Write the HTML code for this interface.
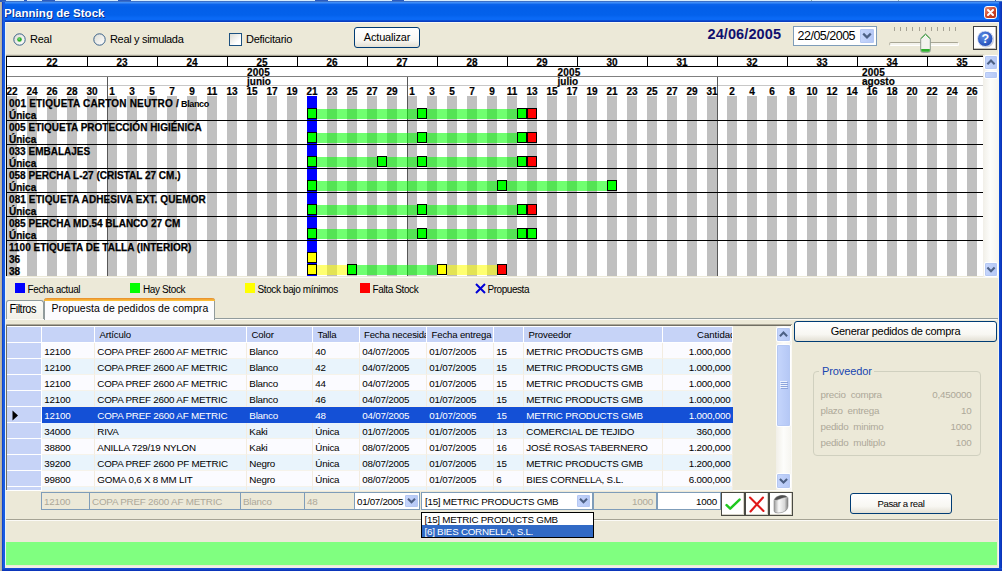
<!DOCTYPE html>
<html><head><meta charset="utf-8"><title>Planning de Stock</title>
<style>
html,body{margin:0;padding:0}
body{width:1002px;height:571px;overflow:hidden;position:relative;background:#ece9d8;font-family:"Liberation Sans",sans-serif;font-size:11px;color:#000}
div{position:absolute;box-sizing:border-box}
.t{white-space:pre}
.b{font-weight:bold;-webkit-text-stroke:0.2px #000}
svg{position:absolute;overflow:visible}
.sq{width:10px;height:11px;border:1px solid #000}
.sbb{background:linear-gradient(90deg,#c6d6fc,#b4c7f5);border:1px solid #fff;border-radius:2px;box-shadow:inset 0 0 0 1px #b5c8f3}
.btn{border:1px solid #003c74;border-radius:3px;background:linear-gradient(#ffffff,#f8f7f2 65%,#e3e0d4);text-align:center}
.hc{background:#c6d3f7;border-right:1px solid #fff;border-bottom:1px solid #fff}
.hh{border-top:1px solid #fff}
.ed{border:1px solid #7f9db9}
</style></head><body>

<div style="left:0px;top:0px;width:1002px;height:2px;background:#2a5cc0"></div>
<div style="left:6px;top:0px;width:18px;height:1px;background:#d6ecfc"></div>
<div style="left:27px;top:0px;width:15px;height:1px;background:#d6ecfc"></div>
<div style="left:55px;top:0px;width:63px;height:1px;background:#d6ecfc"></div>
<div style="left:131px;top:0px;width:184px;height:1px;background:#d6ecfc"></div>
<div style="left:328px;top:0px;width:64px;height:1px;background:#d6ecfc"></div>
<div style="left:404px;top:0px;width:591px;height:1px;background:#d6ecfc"></div>
<div style="left:996px;top:0px;width:6px;height:1px;background:#d6ecfc"></div>
<div style="left:811px;top:0px;width:1px;height:1px;background:#8aa"></div>
<div style="left:898px;top:0px;width:1px;height:1px;background:#8aa"></div>
<div style="left:2px;top:1px;width:1000px;height:21px;background:linear-gradient(#3a6fc8 0px,#3a6fc8 1px,#4a98fa 1px,#3585f4 2px,#0a64ec 3.5px,#035fe9 6px,#0361eb 14px,#0a69f5 17px,#0a69f5 19px,#0a47cc 19.6px,#0838b8 21px)"></div>
<div style="left:5px;top:22px;width:994px;height:1px;background:#f8f8f2"></div>
<div class="t" style="left:4px;top:7.57px;font-size:11.5px;line-height:1;color:#fff;font-weight:bold;text-shadow:1px 1px 0 #0a2f8f;letter-spacing:0.05px">Planning de Stock</div>
<div style="left:984px;top:6px;width:13px;height:13px;border:1px solid #fff;border-radius:3px;background:linear-gradient(135deg,#e8907a,#d0492a 50%,#b53418)"></div>
<svg style="left:984px;top:6px" width="13" height="13" viewBox="0 0 13 13"><path d="M4 4 L9 9 M9 4 L4 9" stroke="#fff" stroke-width="2.1" stroke-linecap="round"/></svg>
<div style="left:0px;top:2px;width:2px;height:569px;background:linear-gradient(90deg,#c6c0b0,#b0ab9c)"></div>
<div style="left:2px;top:2px;width:3px;height:569px;background:linear-gradient(90deg,#0b38c8,#1a63e6 60%,#1458dc)"></div>
<div style="left:5px;top:22px;width:1px;height:546px;background:#e9f3fb"></div>
<div style="left:998px;top:22px;width:1px;height:546px;background:#f6f5ee"></div>
<div style="left:999px;top:2px;width:3px;height:569px;background:linear-gradient(90deg,#0f4fd8,#0a2fb4)"></div>
<div style="left:2px;top:568px;width:1000px;height:3px;background:linear-gradient(#1454d8,#0a2fb4)"></div>
<div style="left:5px;top:566px;width:994px;height:2px;background:#f0eee2"></div>
<svg style="left:13px;top:33px" width="13" height="13" viewBox="0 0 13 13"><defs><linearGradient id="rg13" x1="0" y1="0" x2="1" y2="1"><stop offset="0" stop-color="#dcdcd4"/><stop offset="1" stop-color="#ffffff"/></linearGradient></defs><circle cx="6.5" cy="6.5" r="5.7" fill="url(#rg13)" stroke="#305a84" stroke-width="0.95"/><circle cx="6.5" cy="6.5" r="2.3" fill="#2cae2c"/><circle cx="6.1" cy="6.1" r="1" fill="#6fd86f"/></svg>
<div class="t" style="left:30px;top:34.29px;font-size:11px;line-height:1;letter-spacing:-0.25px">Real</div>
<svg style="left:93px;top:33px" width="13" height="13" viewBox="0 0 13 13"><defs><linearGradient id="rg93" x1="0" y1="0" x2="1" y2="1"><stop offset="0" stop-color="#dcdcd4"/><stop offset="1" stop-color="#ffffff"/></linearGradient></defs><circle cx="6.5" cy="6.5" r="5.7" fill="url(#rg93)" stroke="#305a84" stroke-width="0.95"/></svg>
<div class="t" style="left:110px;top:34.29px;font-size:11px;line-height:1;letter-spacing:-0.32px">Real y simulada</div>
<div style="left:229px;top:33px;width:13px;height:13px;border:1px solid #1c5180;background:linear-gradient(135deg,#dcdcd4,#fff 70%)"></div>
<div class="t" style="left:246px;top:34.29px;font-size:11px;line-height:1;letter-spacing:-0.25px">Deficitario</div>
<div class="btn" style="left:354px;top:27px;width:66px;height:21px;"></div>
<div class="t" style="left:354px;top:32.29px;font-size:11px;line-height:1;width:66px;text-align:center;letter-spacing:-0.2px">Actualizar</div>
<div class="t" style="left:707.5px;top:27.33px;font-size:14.5px;line-height:1;font-weight:bold;color:#10106e;letter-spacing:0.1px">24/06/2005</div>
<div class="ed" style="left:793px;top:26px;width:84px;height:20px;background:#fff"></div>
<div class="t" style="left:797.5px;top:30.02px;font-size:12.5px;line-height:1;letter-spacing:-0.5px">22/05/2005</div>
<div class="sbb" style="left:859px;top:28px;width:16px;height:16px;"></div>
<svg style="left:859px;top:28px" width="16" height="16" viewBox="0 0 16 16"><path d="M4.2 5.6 L8 9.4 L11.8 5.6" fill="none" stroke="#4d6185" stroke-width="2.2"/></svg>
<div style="left:894px;top:27px;width:1px;height:4px;background:#a5a294"></div>
<div style="left:900px;top:27px;width:1px;height:4px;background:#a5a294"></div>
<div style="left:906px;top:27px;width:1px;height:4px;background:#a5a294"></div>
<div style="left:912px;top:27px;width:1px;height:4px;background:#a5a294"></div>
<div style="left:919px;top:27px;width:1px;height:4px;background:#a5a294"></div>
<div style="left:925px;top:27px;width:1px;height:4px;background:#a5a294"></div>
<div style="left:931px;top:27px;width:1px;height:4px;background:#a5a294"></div>
<div style="left:937px;top:27px;width:1px;height:4px;background:#a5a294"></div>
<div style="left:943px;top:27px;width:1px;height:4px;background:#a5a294"></div>
<div style="left:949px;top:27px;width:1px;height:4px;background:#a5a294"></div>
<div style="left:955px;top:27px;width:1px;height:4px;background:#a5a294"></div>
<div style="left:889px;top:42px;width:70px;height:4px;border-radius:2px;background:#f4f3ec;border-top:1px solid #a9a796;border-left:1px solid #b9b7a8;border-bottom:1px solid #fff;border-right:1px solid #fff"></div>
<svg style="left:920px;top:33px" width="11" height="20" viewBox="0 0 11 20"><path d="M5.5 0.7 L10.3 5.4 L10.3 17.5 Q10.3 19.3 8.5 19.3 L2.5 19.3 Q0.7 19.3 0.7 17.5 L0.7 5.4 Z" fill="#f3f3ef" stroke="#8f9a8f" stroke-width="1"/><path d="M1.2 5.6 L5.5 1.4 L9.8 5.6" fill="none" stroke="#3fb53f" stroke-width="1"/><path d="M1.2 16 L9.8 16 L9.8 17.6 Q9.8 18.8 8.5 18.8 L2.5 18.8 Q1.2 18.8 1.2 17.6 Z" fill="#2fae2f"/></svg>
<div style="left:973px;top:26px;width:24px;height:24px;border:1px solid #404040;background:#fff;box-shadow:inset -1px -1px 0 #c8c5b8"></div>
<svg style="left:974px;top:27px" width="22" height="22" viewBox="0 0 22 22"><defs><radialGradient id="hg" cx="0.4" cy="0.35" r="0.7"><stop offset="0" stop-color="#5f8fe6"/><stop offset="1" stop-color="#1d48b4"/></radialGradient></defs><circle cx="12" cy="12.6" r="8" fill="#c9ccd6"/><circle cx="11.2" cy="11.8" r="7.7" fill="url(#hg)" stroke="#e8ecf8" stroke-width="0.8"/><text x="11.3" y="16.2" font-family="Liberation Sans" font-weight="bold" font-size="12.5" fill="#fff" text-anchor="middle">?</text></svg>
<div style="left:6px;top:54px;width:978px;height:1px;background:#dcd9ca"></div>
<div style="left:6px;top:55px;width:978px;height:1px;background:#a8a595"></div>
<div style="left:6px;top:56px;width:978px;height:220px;background:#000"></div>
<div style="left:7px;top:57px;width:976px;height:39px;background:#fff"></div>
<div style="left:87px;top:57px;width:1px;height:9px;background:#000"></div>
<div style="left:157px;top:57px;width:1px;height:9px;background:#000"></div>
<div style="left:227px;top:57px;width:1px;height:9px;background:#000"></div>
<div style="left:297px;top:57px;width:1px;height:9px;background:#000"></div>
<div style="left:367px;top:57px;width:1px;height:9px;background:#000"></div>
<div style="left:437px;top:57px;width:1px;height:9px;background:#000"></div>
<div style="left:507px;top:57px;width:1px;height:9px;background:#000"></div>
<div style="left:577px;top:57px;width:1px;height:9px;background:#000"></div>
<div style="left:647px;top:57px;width:1px;height:9px;background:#000"></div>
<div style="left:717px;top:57px;width:1px;height:9px;background:#000"></div>
<div style="left:787px;top:57px;width:1px;height:9px;background:#000"></div>
<div style="left:857px;top:57px;width:1px;height:9px;background:#000"></div>
<div style="left:927px;top:57px;width:1px;height:9px;background:#000"></div>
<div class="t b" style="left:32px;top:58.33px;width:40px;height:7.67px;overflow:hidden;text-align:center;font-size:10px;line-height:1">22</div>
<div class="t b" style="left:102px;top:58.33px;width:40px;height:7.67px;overflow:hidden;text-align:center;font-size:10px;line-height:1">23</div>
<div class="t b" style="left:172px;top:58.33px;width:40px;height:7.67px;overflow:hidden;text-align:center;font-size:10px;line-height:1">24</div>
<div class="t b" style="left:242px;top:58.33px;width:40px;height:7.67px;overflow:hidden;text-align:center;font-size:10px;line-height:1">25</div>
<div class="t b" style="left:312px;top:58.33px;width:40px;height:7.67px;overflow:hidden;text-align:center;font-size:10px;line-height:1">26</div>
<div class="t b" style="left:382px;top:58.33px;width:40px;height:7.67px;overflow:hidden;text-align:center;font-size:10px;line-height:1">27</div>
<div class="t b" style="left:452px;top:58.33px;width:40px;height:7.67px;overflow:hidden;text-align:center;font-size:10px;line-height:1">28</div>
<div class="t b" style="left:522px;top:58.33px;width:40px;height:7.67px;overflow:hidden;text-align:center;font-size:10px;line-height:1">29</div>
<div class="t b" style="left:592px;top:58.33px;width:40px;height:7.67px;overflow:hidden;text-align:center;font-size:10px;line-height:1">30</div>
<div class="t b" style="left:662px;top:58.33px;width:40px;height:7.67px;overflow:hidden;text-align:center;font-size:10px;line-height:1">31</div>
<div class="t b" style="left:732px;top:58.33px;width:40px;height:7.67px;overflow:hidden;text-align:center;font-size:10px;line-height:1">32</div>
<div class="t b" style="left:802px;top:58.33px;width:40px;height:7.67px;overflow:hidden;text-align:center;font-size:10px;line-height:1">33</div>
<div class="t b" style="left:872px;top:58.33px;width:40px;height:7.67px;overflow:hidden;text-align:center;font-size:10px;line-height:1">34</div>
<div class="t b" style="left:942px;top:58.33px;width:40px;height:7.67px;overflow:hidden;text-align:center;font-size:10px;line-height:1">35</div>
<div style="left:7px;top:66px;width:976px;height:1px;background:#000"></div>
<div style="left:7px;top:76px;width:976px;height:1px;background:#808080"></div>
<div class="t b" style="left:247px;top:67.53px;font-size:10px;line-height:1;letter-spacing:0.2px">2005</div>
<div class="t b" style="left:557.5px;top:67.53px;font-size:10px;line-height:1;letter-spacing:0.2px">2005</div>
<div class="t b" style="left:862px;top:67.53px;font-size:10px;line-height:1;letter-spacing:0.2px">2005</div>
<div style="left:7px;top:85px;width:976px;height:1px;background:#c8c8c8"></div>
<div class="t b" style="left:247px;top:76.83px;font-size:10px;line-height:1;">junio</div>
<div class="t b" style="left:557.5px;top:76.83px;font-size:10px;line-height:1;">julio</div>
<div class="t b" style="left:862px;top:76.83px;font-size:10px;line-height:1;">agosto</div>
<div style="left:7px;top:96px;width:976px;height:180px;background:repeating-linear-gradient(90deg,#c0c0c0 0,#c0c0c0 10px,#fff 10px,#fff 20px)"></div>
<div style="left:107px;top:77px;width:1px;height:199px;background:#585858"></div>
<div style="left:407px;top:77px;width:1px;height:199px;background:#585858"></div>
<div style="left:717px;top:77px;width:1px;height:199px;background:#585858"></div>
<div class="t b" style="left:2px;top:87.23px;font-size:10px;line-height:1;width:20px;text-align:center;">22</div>
<div class="t b" style="left:22px;top:87.23px;font-size:10px;line-height:1;width:20px;text-align:center;">24</div>
<div class="t b" style="left:42px;top:87.23px;font-size:10px;line-height:1;width:20px;text-align:center;">26</div>
<div class="t b" style="left:62px;top:87.23px;font-size:10px;line-height:1;width:20px;text-align:center;">28</div>
<div class="t b" style="left:82px;top:87.23px;font-size:10px;line-height:1;width:20px;text-align:center;">30</div>
<div class="t b" style="left:102px;top:87.23px;font-size:10px;line-height:1;width:20px;text-align:center;">1</div>
<div class="t b" style="left:122px;top:87.23px;font-size:10px;line-height:1;width:20px;text-align:center;">3</div>
<div class="t b" style="left:142px;top:87.23px;font-size:10px;line-height:1;width:20px;text-align:center;">5</div>
<div class="t b" style="left:162px;top:87.23px;font-size:10px;line-height:1;width:20px;text-align:center;">7</div>
<div class="t b" style="left:182px;top:87.23px;font-size:10px;line-height:1;width:20px;text-align:center;">9</div>
<div class="t b" style="left:202px;top:87.23px;font-size:10px;line-height:1;width:20px;text-align:center;">11</div>
<div class="t b" style="left:222px;top:87.23px;font-size:10px;line-height:1;width:20px;text-align:center;">13</div>
<div class="t b" style="left:242px;top:87.23px;font-size:10px;line-height:1;width:20px;text-align:center;">15</div>
<div class="t b" style="left:262px;top:87.23px;font-size:10px;line-height:1;width:20px;text-align:center;">17</div>
<div class="t b" style="left:282px;top:87.23px;font-size:10px;line-height:1;width:20px;text-align:center;">19</div>
<div class="t b" style="left:302px;top:87.23px;font-size:10px;line-height:1;width:20px;text-align:center;">21</div>
<div class="t b" style="left:322px;top:87.23px;font-size:10px;line-height:1;width:20px;text-align:center;">23</div>
<div class="t b" style="left:342px;top:87.23px;font-size:10px;line-height:1;width:20px;text-align:center;">25</div>
<div class="t b" style="left:362px;top:87.23px;font-size:10px;line-height:1;width:20px;text-align:center;">27</div>
<div class="t b" style="left:382px;top:87.23px;font-size:10px;line-height:1;width:20px;text-align:center;">29</div>
<div class="t b" style="left:402px;top:87.23px;font-size:10px;line-height:1;width:20px;text-align:center;">1</div>
<div class="t b" style="left:422px;top:87.23px;font-size:10px;line-height:1;width:20px;text-align:center;">3</div>
<div class="t b" style="left:442px;top:87.23px;font-size:10px;line-height:1;width:20px;text-align:center;">5</div>
<div class="t b" style="left:462px;top:87.23px;font-size:10px;line-height:1;width:20px;text-align:center;">7</div>
<div class="t b" style="left:482px;top:87.23px;font-size:10px;line-height:1;width:20px;text-align:center;">9</div>
<div class="t b" style="left:502px;top:87.23px;font-size:10px;line-height:1;width:20px;text-align:center;">11</div>
<div class="t b" style="left:522px;top:87.23px;font-size:10px;line-height:1;width:20px;text-align:center;">13</div>
<div class="t b" style="left:542px;top:87.23px;font-size:10px;line-height:1;width:20px;text-align:center;">15</div>
<div class="t b" style="left:562px;top:87.23px;font-size:10px;line-height:1;width:20px;text-align:center;">17</div>
<div class="t b" style="left:582px;top:87.23px;font-size:10px;line-height:1;width:20px;text-align:center;">19</div>
<div class="t b" style="left:602px;top:87.23px;font-size:10px;line-height:1;width:20px;text-align:center;">21</div>
<div class="t b" style="left:622px;top:87.23px;font-size:10px;line-height:1;width:20px;text-align:center;">23</div>
<div class="t b" style="left:642px;top:87.23px;font-size:10px;line-height:1;width:20px;text-align:center;">25</div>
<div class="t b" style="left:662px;top:87.23px;font-size:10px;line-height:1;width:20px;text-align:center;">27</div>
<div class="t b" style="left:682px;top:87.23px;font-size:10px;line-height:1;width:20px;text-align:center;">29</div>
<div class="t b" style="left:702px;top:87.23px;font-size:10px;line-height:1;width:20px;text-align:center;">31</div>
<div class="t b" style="left:722px;top:87.23px;font-size:10px;line-height:1;width:20px;text-align:center;">2</div>
<div class="t b" style="left:742px;top:87.23px;font-size:10px;line-height:1;width:20px;text-align:center;">4</div>
<div class="t b" style="left:762px;top:87.23px;font-size:10px;line-height:1;width:20px;text-align:center;">6</div>
<div class="t b" style="left:782px;top:87.23px;font-size:10px;line-height:1;width:20px;text-align:center;">8</div>
<div class="t b" style="left:802px;top:87.23px;font-size:10px;line-height:1;width:20px;text-align:center;">10</div>
<div class="t b" style="left:822px;top:87.23px;font-size:10px;line-height:1;width:20px;text-align:center;">12</div>
<div class="t b" style="left:842px;top:87.23px;font-size:10px;line-height:1;width:20px;text-align:center;">14</div>
<div class="t b" style="left:862px;top:87.23px;font-size:10px;line-height:1;width:20px;text-align:center;">16</div>
<div class="t b" style="left:882px;top:87.23px;font-size:10px;line-height:1;width:20px;text-align:center;">18</div>
<div class="t b" style="left:902px;top:87.23px;font-size:10px;line-height:1;width:20px;text-align:center;">20</div>
<div class="t b" style="left:922px;top:87.23px;font-size:10px;line-height:1;width:20px;text-align:center;">22</div>
<div class="t b" style="left:942px;top:87.23px;font-size:10px;line-height:1;width:20px;text-align:center;">24</div>
<div class="t b" style="left:962px;top:87.23px;font-size:10px;line-height:1;width:20px;text-align:center;">26</div>
<div style="left:307px;top:96px;width:10px;height:180px;background:#0000ff"></div>
<div style="left:7px;top:120px;width:976px;height:1px;background:#000"></div>
<div style="left:7px;top:144px;width:976px;height:1px;background:#000"></div>
<div style="left:7px;top:168px;width:976px;height:1px;background:#000"></div>
<div style="left:7px;top:192px;width:976px;height:1px;background:#000"></div>
<div style="left:7px;top:216px;width:976px;height:1px;background:#000"></div>
<div style="left:7px;top:240px;width:976px;height:1px;background:#000"></div>
<div style="left:317px;top:109px;width:200px;height:10px;background:rgba(0,255,0,0.56)"></div>
<div class="sq" style="left:307px;top:108px;background:#00ff00"></div>
<div class="sq" style="left:417px;top:108px;background:#00ff00"></div>
<div class="sq" style="left:517px;top:108px;background:#00ff00"></div>
<div class="sq" style="left:527px;top:108px;background:#ff0000"></div>
<div style="left:317px;top:133px;width:200px;height:10px;background:rgba(0,255,0,0.56)"></div>
<div class="sq" style="left:307px;top:132px;background:#00ff00"></div>
<div class="sq" style="left:417px;top:132px;background:#00ff00"></div>
<div class="sq" style="left:517px;top:132px;background:#00ff00"></div>
<div class="sq" style="left:527px;top:132px;background:#ff0000"></div>
<div style="left:317px;top:157px;width:200px;height:10px;background:rgba(0,255,0,0.56)"></div>
<div class="sq" style="left:307px;top:156px;background:#00ff00"></div>
<div class="sq" style="left:377px;top:156px;background:#00ff00"></div>
<div class="sq" style="left:417px;top:156px;background:#00ff00"></div>
<div class="sq" style="left:517px;top:156px;background:#00ff00"></div>
<div class="sq" style="left:527px;top:156px;background:#ff0000"></div>
<div style="left:317px;top:181px;width:290px;height:10px;background:rgba(0,255,0,0.56)"></div>
<div class="sq" style="left:307px;top:180px;background:#00ff00"></div>
<div class="sq" style="left:497px;top:180px;background:#00ff00"></div>
<div class="sq" style="left:607px;top:180px;background:#00ff00"></div>
<div style="left:317px;top:205px;width:200px;height:10px;background:rgba(0,255,0,0.56)"></div>
<div class="sq" style="left:307px;top:204px;background:#00ff00"></div>
<div class="sq" style="left:417px;top:204px;background:#00ff00"></div>
<div class="sq" style="left:517px;top:204px;background:#00ff00"></div>
<div class="sq" style="left:527px;top:204px;background:#ff0000"></div>
<div style="left:317px;top:229px;width:200px;height:10px;background:rgba(0,255,0,0.56)"></div>
<div class="sq" style="left:307px;top:228px;background:#00ff00"></div>
<div class="sq" style="left:417px;top:228px;background:#00ff00"></div>
<div class="sq" style="left:517px;top:228px;background:#00ff00"></div>
<div class="sq" style="left:527px;top:228px;background:#00ff00"></div>
<div class="sq" style="left:307px;top:252px;background:#ffff00"></div>
<div style="left:317px;top:265px;width:30px;height:10px;background:rgba(255,255,0,0.56)"></div>
<div style="left:357px;top:265px;width:80px;height:10px;background:rgba(0,255,0,0.56)"></div>
<div style="left:447px;top:265px;width:50px;height:10px;background:rgba(255,255,0,0.56)"></div>
<div class="sq" style="left:307px;top:264px;background:#ffff00"></div>
<div class="sq" style="left:347px;top:264px;background:#00ff00"></div>
<div class="sq" style="left:437px;top:264px;background:#ffff00"></div>
<div class="sq" style="left:497px;top:264px;background:#ff0000"></div>
<div class="t" style="left:9px;top:99.23px;font-size:10px;line-height:1;font-weight:bold;-webkit-text-stroke:0.25px #000;letter-spacing:0.18px">001 ETIQUETA CARTON NEUTRO /</div>
<div class="t" style="left:9px;top:110.73px;font-size:10px;line-height:1;font-weight:bold;-webkit-text-stroke:0.25px #000">Única</div>
<div class="t" style="left:9px;top:123.23px;font-size:10px;line-height:1;font-weight:bold;-webkit-text-stroke:0.25px #000">005 ETIQUETA PROTECCIÓN HIGIÉNICA</div>
<div class="t" style="left:9px;top:134.73px;font-size:10px;line-height:1;font-weight:bold;-webkit-text-stroke:0.25px #000">Única</div>
<div class="t" style="left:9px;top:147.23px;font-size:10px;line-height:1;font-weight:bold;-webkit-text-stroke:0.25px #000">033 EMBALAJES</div>
<div class="t" style="left:9px;top:158.73px;font-size:10px;line-height:1;font-weight:bold;-webkit-text-stroke:0.25px #000">Única</div>
<div class="t" style="left:9px;top:171.23px;font-size:10px;line-height:1;font-weight:bold;-webkit-text-stroke:0.25px #000">058 PERCHA L-27 (CRISTAL 27 CM.)</div>
<div class="t" style="left:9px;top:182.73px;font-size:10px;line-height:1;font-weight:bold;-webkit-text-stroke:0.25px #000">Única</div>
<div class="t" style="left:9px;top:195.23px;font-size:10px;line-height:1;font-weight:bold;-webkit-text-stroke:0.25px #000;letter-spacing:0.1px">081 ETIQUETA ADHESIVA EXT. QUEMOR</div>
<div class="t" style="left:9px;top:206.73px;font-size:10px;line-height:1;font-weight:bold;-webkit-text-stroke:0.25px #000">Única</div>
<div class="t" style="left:9px;top:219.23px;font-size:10px;line-height:1;font-weight:bold;-webkit-text-stroke:0.25px #000">085 PERCHA MD.54 BLANCO 27 CM</div>
<div class="t" style="left:9px;top:230.73px;font-size:10px;line-height:1;font-weight:bold;-webkit-text-stroke:0.25px #000">Única</div>
<div class="t" style="left:9px;top:243.23px;font-size:10px;line-height:1;font-weight:bold;-webkit-text-stroke:0.25px #000">1100 ETIQUETA DE TALLA (INTERIOR)</div>
<div class="t" style="left:9px;top:254.73px;font-size:10px;line-height:1;font-weight:bold;-webkit-text-stroke:0.25px #000">36</div>
<div class="t" style="left:9px;top:266.74px;font-size:10px;line-height:1;font-weight:bold;-webkit-text-stroke:0.25px #000">38</div>
<div class="t" style="left:181px;top:99.68px;font-size:9px;line-height:1;font-weight:bold;letter-spacing:-0.35px">Blanco</div>
<div style="left:983px;top:55px;width:15px;height:222px;background:linear-gradient(90deg,#f1efe8,#fdfdfb 50%,#f6f5f0)"></div>
<div class="sbb" style="left:984px;top:55px;width:14px;height:15px;"></div>
<svg style="left:984px;top:55px" width="14" height="15" viewBox="0 0 14 15"><path d="M3.4 9.2 L7 5.6 L10.6 9.2" fill="none" stroke="#4d6185" stroke-width="2.1"/></svg>
<div class="sbb" style="left:984px;top:71px;width:14px;height:8px;"></div>
<div class="sbb" style="left:984px;top:262px;width:14px;height:15px;"></div>
<svg style="left:984px;top:262px" width="14" height="15" viewBox="0 0 14 15"><path d="M3.4 5.6 L7 9.2 L10.6 5.6" fill="none" stroke="#4d6185" stroke-width="2.1"/></svg>
<div style="left:6px;top:277px;width:992px;height:1px;background:#fbfaf5"></div>
<div style="left:15px;top:283px;width:10px;height:10px;background:#0000ff"></div>
<div class="t" style="left:27.5px;top:284.64px;font-size:10px;line-height:1;letter-spacing:-0.38px">Fecha actual</div>
<div style="left:130px;top:283px;width:10px;height:10px;background:#00ff00"></div>
<div class="t" style="left:143px;top:284.64px;font-size:10px;line-height:1;letter-spacing:-0.38px">Hay Stock</div>
<div style="left:245px;top:283px;width:10px;height:10px;background:#ffff00"></div>
<div class="t" style="left:257.5px;top:284.64px;font-size:10px;line-height:1;letter-spacing:-0.38px">Stock bajo mínimos</div>
<div style="left:360px;top:283px;width:10px;height:10px;background:#ff0000"></div>
<div class="t" style="left:372.5px;top:284.64px;font-size:10px;line-height:1;letter-spacing:-0.38px">Falta Stock</div>
<svg style="left:475px;top:283px" width="11" height="11" viewBox="0 0 11 11"><path d="M1 1 L10 10 M10 1 L1 10" stroke="#0000d8" stroke-width="2"/></svg>
<div class="t" style="left:487.5px;top:284.64px;font-size:10px;line-height:1;letter-spacing:-0.45px">Propuesta</div>
<div style="left:6px;top:318px;width:992px;height:202px;border-top:1px solid #919b9c;border-bottom:1px solid #a5a394;background:#ece9d8"></div>
<div style="left:6px;top:520px;width:992px;height:1px;background:#fbfaf6"></div>
<div style="left:7px;top:319px;width:990px;height:1px;background:#fbfaf6"></div>
<div style="left:6px;top:300px;width:38px;height:19px;border:1px solid #919b9c;border-bottom:none;border-radius:3px 3px 0 0;background:linear-gradient(#fbfbf8,#f1f0e8)"></div>
<div class="t" style="left:9.5px;top:304.49px;font-size:11px;line-height:1;letter-spacing:-0.5px;transform:scaleY(1.2);transform-origin:0 84.65%">Filtros</div>
<div style="left:44px;top:298px;width:171px;height:22px;border:1px solid #919b9c;border-bottom:none;border-top:none;border-radius:3px 3px 0 0;background:#fcfcfe"></div>
<div style="left:44px;top:298px;width:171px;height:3px;border-radius:3px 3px 0 0;background:linear-gradient(#e68b2c,#ffc73c)"></div>
<div class="t" style="left:51.5px;top:303.11px;font-size:10.5px;line-height:1;letter-spacing:0.07px;transform:scaleY(1.12);transform-origin:0 84.65%">Propuesta de pedidos de compra</div>
<div style="left:6px;top:324px;width:786px;height:1px;background:#aca899"></div>
<div style="left:6px;top:325px;width:785px;height:1px;background:#716f64"></div>
<div style="left:6px;top:325px;width:1px;height:165px;background:#716f64"></div>
<div style="left:7px;top:326px;width:784px;height:164px;background:#ece9d8"></div>
<div style="left:6px;top:490px;width:786px;height:1px;background:#fbfaf6"></div>
<div style="left:791px;top:325px;width:1px;height:166px;background:#fbfaf6"></div>
<div class="hc hh" style="left:7px;top:326px;width:35px;height:17px;overflow:hidden"></div>
<div class="hc hh" style="left:42px;top:326px;width:53px;height:17px;overflow:hidden"></div>
<div class="hc hh" style="left:95px;top:326px;width:152px;height:17px;overflow:hidden"></div>
<div class="t" style="left:99.5px;top:330.17px;font-size:9.6px;line-height:1;letter-spacing:-0.15px">Artículo</div>
<div class="hc hh" style="left:247px;top:326px;width:66px;height:17px;overflow:hidden"></div>
<div class="t" style="left:251.5px;top:330.17px;font-size:9.6px;line-height:1;letter-spacing:-0.15px">Color</div>
<div class="hc hh" style="left:313px;top:326px;width:47px;height:17px;overflow:hidden"></div>
<div class="t" style="left:317.5px;top:330.17px;font-size:9.6px;line-height:1;letter-spacing:-0.15px">Talla</div>
<div class="hc hh" style="left:360px;top:326px;width:67px;height:17px;overflow:hidden"></div>
<div class="t" style="left:360px;top:330.17px;width:66px;height:12px;overflow:hidden;font-size:9.6px;line-height:1"><span style="position:absolute;left:4px;letter-spacing:-0.2px">Fecha necesidad</span></div>
<div class="hc hh" style="left:427px;top:326px;width:67px;height:17px;overflow:hidden"></div>
<div class="t" style="left:431.5px;top:330.17px;font-size:9.6px;line-height:1;letter-spacing:-0.15px">Fecha entrega</div>
<div class="hc hh" style="left:494px;top:326px;width:30px;height:17px;overflow:hidden"></div>
<div class="hc hh" style="left:524px;top:326px;width:139px;height:17px;overflow:hidden"></div>
<div class="t" style="left:528.5px;top:330.17px;font-size:9.6px;line-height:1;letter-spacing:-0.15px">Proveedor</div>
<div class="hc hh" style="left:663px;top:326px;width:70px;height:17px;overflow:hidden"></div>
<div class="t" style="left:663px;top:330.17px;width:69px;height:12px;overflow:hidden;font-size:9.6px;line-height:1"><span style="position:absolute;left:34px">Cantidad</span></div>
<div class="hc" style="left:7px;top:343px;width:35px;height:16px;"></div>
<div style="left:42px;top:343px;width:53px;height:16px;background:#fbfbff;border-right:1px solid #f3ece0;border-bottom:1px solid #f6f3ea"></div>
<div style="left:95px;top:343px;width:152px;height:16px;background:#fbfbff;border-right:1px solid #f3ece0;border-bottom:1px solid #f6f3ea"></div>
<div style="left:247px;top:343px;width:66px;height:16px;background:#fbfbff;border-right:1px solid #f3ece0;border-bottom:1px solid #f6f3ea"></div>
<div style="left:313px;top:343px;width:47px;height:16px;background:#fbfbff;border-right:1px solid #f3ece0;border-bottom:1px solid #f6f3ea"></div>
<div style="left:360px;top:343px;width:67px;height:16px;background:#fbfbff;border-right:1px solid #f3ece0;border-bottom:1px solid #f6f3ea"></div>
<div style="left:427px;top:343px;width:67px;height:16px;background:#fbfbff;border-right:1px solid #f3ece0;border-bottom:1px solid #f6f3ea"></div>
<div style="left:494px;top:343px;width:30px;height:16px;background:#fbfbff;border-right:1px solid #f3ece0;border-bottom:1px solid #f6f3ea"></div>
<div style="left:524px;top:343px;width:139px;height:16px;background:#fbfbff;border-right:1px solid #f3ece0;border-bottom:1px solid #f6f3ea"></div>
<div style="left:663px;top:343px;width:70px;height:16px;background:#fbfbff;border-right:1px solid #f3ece0;border-bottom:1px solid #f6f3ea"></div>
<div class="t" style="left:44.3px;top:346.6px;font-size:9.8px;line-height:1;color:#000;letter-spacing:-0.2px">12100</div>
<div class="t" style="left:97.3px;top:346.6px;font-size:9.8px;line-height:1;color:#000;letter-spacing:-0.2px">COPA PREF 2600 AF METRIC</div>
<div class="t" style="left:249.3px;top:346.6px;font-size:9.8px;line-height:1;color:#000;letter-spacing:-0.2px">Blanco</div>
<div class="t" style="left:315.3px;top:346.6px;font-size:9.8px;line-height:1;color:#000;letter-spacing:-0.2px">40</div>
<div class="t" style="left:362.3px;top:346.6px;font-size:9.8px;line-height:1;color:#000;letter-spacing:-0.2px">04/07/2005</div>
<div class="t" style="left:429.3px;top:346.6px;font-size:9.8px;line-height:1;color:#000;letter-spacing:-0.2px">01/07/2005</div>
<div class="t" style="left:496.3px;top:346.6px;font-size:9.8px;line-height:1;color:#000;letter-spacing:-0.2px">15</div>
<div class="t" style="left:526.3px;top:346.6px;font-size:9.8px;line-height:1;color:#000;letter-spacing:-0.2px">METRIC PRODUCTS GMB</div>
<div class="t" style="left:663px;top:346.6px;font-size:9.8px;line-height:1;width:67.5px;text-align:right;color:#000;letter-spacing:-0.2px">1.000,000</div>
<div class="hc" style="left:7px;top:359px;width:35px;height:16px;"></div>
<div style="left:42px;top:359px;width:53px;height:16px;background:#e9f4fc;border-right:1px solid #f3ece0;border-bottom:1px solid #f6f3ea"></div>
<div style="left:95px;top:359px;width:152px;height:16px;background:#e9f4fc;border-right:1px solid #f3ece0;border-bottom:1px solid #f6f3ea"></div>
<div style="left:247px;top:359px;width:66px;height:16px;background:#e9f4fc;border-right:1px solid #f3ece0;border-bottom:1px solid #f6f3ea"></div>
<div style="left:313px;top:359px;width:47px;height:16px;background:#e9f4fc;border-right:1px solid #f3ece0;border-bottom:1px solid #f6f3ea"></div>
<div style="left:360px;top:359px;width:67px;height:16px;background:#e9f4fc;border-right:1px solid #f3ece0;border-bottom:1px solid #f6f3ea"></div>
<div style="left:427px;top:359px;width:67px;height:16px;background:#e9f4fc;border-right:1px solid #f3ece0;border-bottom:1px solid #f6f3ea"></div>
<div style="left:494px;top:359px;width:30px;height:16px;background:#e9f4fc;border-right:1px solid #f3ece0;border-bottom:1px solid #f6f3ea"></div>
<div style="left:524px;top:359px;width:139px;height:16px;background:#e9f4fc;border-right:1px solid #f3ece0;border-bottom:1px solid #f6f3ea"></div>
<div style="left:663px;top:359px;width:70px;height:16px;background:#e9f4fc;border-right:1px solid #f3ece0;border-bottom:1px solid #f6f3ea"></div>
<div class="t" style="left:44.3px;top:362.6px;font-size:9.8px;line-height:1;color:#000;letter-spacing:-0.2px">12100</div>
<div class="t" style="left:97.3px;top:362.6px;font-size:9.8px;line-height:1;color:#000;letter-spacing:-0.2px">COPA PREF 2600 AF METRIC</div>
<div class="t" style="left:249.3px;top:362.6px;font-size:9.8px;line-height:1;color:#000;letter-spacing:-0.2px">Blanco</div>
<div class="t" style="left:315.3px;top:362.6px;font-size:9.8px;line-height:1;color:#000;letter-spacing:-0.2px">42</div>
<div class="t" style="left:362.3px;top:362.6px;font-size:9.8px;line-height:1;color:#000;letter-spacing:-0.2px">04/07/2005</div>
<div class="t" style="left:429.3px;top:362.6px;font-size:9.8px;line-height:1;color:#000;letter-spacing:-0.2px">01/07/2005</div>
<div class="t" style="left:496.3px;top:362.6px;font-size:9.8px;line-height:1;color:#000;letter-spacing:-0.2px">15</div>
<div class="t" style="left:526.3px;top:362.6px;font-size:9.8px;line-height:1;color:#000;letter-spacing:-0.2px">METRIC PRODUCTS GMB</div>
<div class="t" style="left:663px;top:362.6px;font-size:9.8px;line-height:1;width:67.5px;text-align:right;color:#000;letter-spacing:-0.2px">1.000,000</div>
<div class="hc" style="left:7px;top:375px;width:35px;height:16px;"></div>
<div style="left:42px;top:375px;width:53px;height:16px;background:#fbfbff;border-right:1px solid #f3ece0;border-bottom:1px solid #f6f3ea"></div>
<div style="left:95px;top:375px;width:152px;height:16px;background:#fbfbff;border-right:1px solid #f3ece0;border-bottom:1px solid #f6f3ea"></div>
<div style="left:247px;top:375px;width:66px;height:16px;background:#fbfbff;border-right:1px solid #f3ece0;border-bottom:1px solid #f6f3ea"></div>
<div style="left:313px;top:375px;width:47px;height:16px;background:#fbfbff;border-right:1px solid #f3ece0;border-bottom:1px solid #f6f3ea"></div>
<div style="left:360px;top:375px;width:67px;height:16px;background:#fbfbff;border-right:1px solid #f3ece0;border-bottom:1px solid #f6f3ea"></div>
<div style="left:427px;top:375px;width:67px;height:16px;background:#fbfbff;border-right:1px solid #f3ece0;border-bottom:1px solid #f6f3ea"></div>
<div style="left:494px;top:375px;width:30px;height:16px;background:#fbfbff;border-right:1px solid #f3ece0;border-bottom:1px solid #f6f3ea"></div>
<div style="left:524px;top:375px;width:139px;height:16px;background:#fbfbff;border-right:1px solid #f3ece0;border-bottom:1px solid #f6f3ea"></div>
<div style="left:663px;top:375px;width:70px;height:16px;background:#fbfbff;border-right:1px solid #f3ece0;border-bottom:1px solid #f6f3ea"></div>
<div class="t" style="left:44.3px;top:378.6px;font-size:9.8px;line-height:1;color:#000;letter-spacing:-0.2px">12100</div>
<div class="t" style="left:97.3px;top:378.6px;font-size:9.8px;line-height:1;color:#000;letter-spacing:-0.2px">COPA PREF 2600 AF METRIC</div>
<div class="t" style="left:249.3px;top:378.6px;font-size:9.8px;line-height:1;color:#000;letter-spacing:-0.2px">Blanco</div>
<div class="t" style="left:315.3px;top:378.6px;font-size:9.8px;line-height:1;color:#000;letter-spacing:-0.2px">44</div>
<div class="t" style="left:362.3px;top:378.6px;font-size:9.8px;line-height:1;color:#000;letter-spacing:-0.2px">04/07/2005</div>
<div class="t" style="left:429.3px;top:378.6px;font-size:9.8px;line-height:1;color:#000;letter-spacing:-0.2px">01/07/2005</div>
<div class="t" style="left:496.3px;top:378.6px;font-size:9.8px;line-height:1;color:#000;letter-spacing:-0.2px">15</div>
<div class="t" style="left:526.3px;top:378.6px;font-size:9.8px;line-height:1;color:#000;letter-spacing:-0.2px">METRIC PRODUCTS GMB</div>
<div class="t" style="left:663px;top:378.6px;font-size:9.8px;line-height:1;width:67.5px;text-align:right;color:#000;letter-spacing:-0.2px">1.000,000</div>
<div class="hc" style="left:7px;top:391px;width:35px;height:16px;"></div>
<div style="left:42px;top:391px;width:53px;height:16px;background:#e9f4fc;border-right:1px solid #f3ece0;border-bottom:1px solid #f6f3ea"></div>
<div style="left:95px;top:391px;width:152px;height:16px;background:#e9f4fc;border-right:1px solid #f3ece0;border-bottom:1px solid #f6f3ea"></div>
<div style="left:247px;top:391px;width:66px;height:16px;background:#e9f4fc;border-right:1px solid #f3ece0;border-bottom:1px solid #f6f3ea"></div>
<div style="left:313px;top:391px;width:47px;height:16px;background:#e9f4fc;border-right:1px solid #f3ece0;border-bottom:1px solid #f6f3ea"></div>
<div style="left:360px;top:391px;width:67px;height:16px;background:#e9f4fc;border-right:1px solid #f3ece0;border-bottom:1px solid #f6f3ea"></div>
<div style="left:427px;top:391px;width:67px;height:16px;background:#e9f4fc;border-right:1px solid #f3ece0;border-bottom:1px solid #f6f3ea"></div>
<div style="left:494px;top:391px;width:30px;height:16px;background:#e9f4fc;border-right:1px solid #f3ece0;border-bottom:1px solid #f6f3ea"></div>
<div style="left:524px;top:391px;width:139px;height:16px;background:#e9f4fc;border-right:1px solid #f3ece0;border-bottom:1px solid #f6f3ea"></div>
<div style="left:663px;top:391px;width:70px;height:16px;background:#e9f4fc;border-right:1px solid #f3ece0;border-bottom:1px solid #f6f3ea"></div>
<div class="t" style="left:44.3px;top:394.6px;font-size:9.8px;line-height:1;color:#000;letter-spacing:-0.2px">12100</div>
<div class="t" style="left:97.3px;top:394.6px;font-size:9.8px;line-height:1;color:#000;letter-spacing:-0.2px">COPA PREF 2600 AF METRIC</div>
<div class="t" style="left:249.3px;top:394.6px;font-size:9.8px;line-height:1;color:#000;letter-spacing:-0.2px">Blanco</div>
<div class="t" style="left:315.3px;top:394.6px;font-size:9.8px;line-height:1;color:#000;letter-spacing:-0.2px">46</div>
<div class="t" style="left:362.3px;top:394.6px;font-size:9.8px;line-height:1;color:#000;letter-spacing:-0.2px">04/07/2005</div>
<div class="t" style="left:429.3px;top:394.6px;font-size:9.8px;line-height:1;color:#000;letter-spacing:-0.2px">01/07/2005</div>
<div class="t" style="left:496.3px;top:394.6px;font-size:9.8px;line-height:1;color:#000;letter-spacing:-0.2px">15</div>
<div class="t" style="left:526.3px;top:394.6px;font-size:9.8px;line-height:1;color:#000;letter-spacing:-0.2px">METRIC PRODUCTS GMB</div>
<div class="t" style="left:663px;top:394.6px;font-size:9.8px;line-height:1;width:67.5px;text-align:right;color:#000;letter-spacing:-0.2px">1.000,000</div>
<div class="hc" style="left:7px;top:407px;width:35px;height:16px;"></div>
<div style="left:42px;top:407px;width:53px;height:16px;background:#1450d6;border-right:1px solid #1450d6;border-bottom:1px solid #1450d6"></div>
<div style="left:95px;top:407px;width:152px;height:16px;background:#1450d6;border-right:1px solid #1450d6;border-bottom:1px solid #1450d6"></div>
<div style="left:247px;top:407px;width:66px;height:16px;background:#1450d6;border-right:1px solid #1450d6;border-bottom:1px solid #1450d6"></div>
<div style="left:313px;top:407px;width:47px;height:16px;background:#1450d6;border-right:1px solid #1450d6;border-bottom:1px solid #1450d6"></div>
<div style="left:360px;top:407px;width:67px;height:16px;background:#1450d6;border-right:1px solid #1450d6;border-bottom:1px solid #1450d6"></div>
<div style="left:427px;top:407px;width:67px;height:16px;background:#1450d6;border-right:1px solid #1450d6;border-bottom:1px solid #1450d6"></div>
<div style="left:494px;top:407px;width:30px;height:16px;background:#1450d6;border-right:1px solid #1450d6;border-bottom:1px solid #1450d6"></div>
<div style="left:524px;top:407px;width:139px;height:16px;background:#1450d6;border-right:1px solid #1450d6;border-bottom:1px solid #1450d6"></div>
<div style="left:663px;top:407px;width:70px;height:16px;background:#1450d6;border-right:1px solid #1450d6;border-bottom:1px solid #1450d6"></div>
<div class="t" style="left:44.3px;top:410.6px;font-size:9.8px;line-height:1;color:#fff;letter-spacing:-0.2px">12100</div>
<div class="t" style="left:97.3px;top:410.6px;font-size:9.8px;line-height:1;color:#fff;letter-spacing:-0.2px">COPA PREF 2600 AF METRIC</div>
<div class="t" style="left:249.3px;top:410.6px;font-size:9.8px;line-height:1;color:#fff;letter-spacing:-0.2px">Blanco</div>
<div class="t" style="left:315.3px;top:410.6px;font-size:9.8px;line-height:1;color:#fff;letter-spacing:-0.2px">48</div>
<div class="t" style="left:362.3px;top:410.6px;font-size:9.8px;line-height:1;color:#fff;letter-spacing:-0.2px">04/07/2005</div>
<div class="t" style="left:429.3px;top:410.6px;font-size:9.8px;line-height:1;color:#fff;letter-spacing:-0.2px">01/07/2005</div>
<div class="t" style="left:496.3px;top:410.6px;font-size:9.8px;line-height:1;color:#fff;letter-spacing:-0.2px">15</div>
<div class="t" style="left:526.3px;top:410.6px;font-size:9.8px;line-height:1;color:#fff;letter-spacing:-0.2px">METRIC PRODUCTS GMB</div>
<div class="t" style="left:663px;top:410.6px;font-size:9.8px;line-height:1;width:67.5px;text-align:right;color:#fff;letter-spacing:-0.2px">1.000,000</div>
<div class="hc" style="left:7px;top:423px;width:35px;height:16px;"></div>
<div style="left:42px;top:423px;width:53px;height:16px;background:#e9f4fc;border-right:1px solid #f3ece0;border-bottom:1px solid #f6f3ea"></div>
<div style="left:95px;top:423px;width:152px;height:16px;background:#e9f4fc;border-right:1px solid #f3ece0;border-bottom:1px solid #f6f3ea"></div>
<div style="left:247px;top:423px;width:66px;height:16px;background:#e9f4fc;border-right:1px solid #f3ece0;border-bottom:1px solid #f6f3ea"></div>
<div style="left:313px;top:423px;width:47px;height:16px;background:#e9f4fc;border-right:1px solid #f3ece0;border-bottom:1px solid #f6f3ea"></div>
<div style="left:360px;top:423px;width:67px;height:16px;background:#e9f4fc;border-right:1px solid #f3ece0;border-bottom:1px solid #f6f3ea"></div>
<div style="left:427px;top:423px;width:67px;height:16px;background:#e9f4fc;border-right:1px solid #f3ece0;border-bottom:1px solid #f6f3ea"></div>
<div style="left:494px;top:423px;width:30px;height:16px;background:#e9f4fc;border-right:1px solid #f3ece0;border-bottom:1px solid #f6f3ea"></div>
<div style="left:524px;top:423px;width:139px;height:16px;background:#e9f4fc;border-right:1px solid #f3ece0;border-bottom:1px solid #f6f3ea"></div>
<div style="left:663px;top:423px;width:70px;height:16px;background:#e9f4fc;border-right:1px solid #f3ece0;border-bottom:1px solid #f6f3ea"></div>
<div class="t" style="left:44.3px;top:426.6px;font-size:9.8px;line-height:1;color:#000;letter-spacing:-0.2px">34000</div>
<div class="t" style="left:97.3px;top:426.6px;font-size:9.8px;line-height:1;color:#000;letter-spacing:-0.2px">RIVA</div>
<div class="t" style="left:249.3px;top:426.6px;font-size:9.8px;line-height:1;color:#000;letter-spacing:-0.2px">Kaki</div>
<div class="t" style="left:315.3px;top:426.6px;font-size:9.8px;line-height:1;color:#000;letter-spacing:-0.2px">Única</div>
<div class="t" style="left:362.3px;top:426.6px;font-size:9.8px;line-height:1;color:#000;letter-spacing:-0.2px">01/07/2005</div>
<div class="t" style="left:429.3px;top:426.6px;font-size:9.8px;line-height:1;color:#000;letter-spacing:-0.2px">01/07/2005</div>
<div class="t" style="left:496.3px;top:426.6px;font-size:9.8px;line-height:1;color:#000;letter-spacing:-0.2px">13</div>
<div class="t" style="left:526.3px;top:426.6px;font-size:9.8px;line-height:1;color:#000;letter-spacing:-0.2px">COMERCIAL DE TEJIDO</div>
<div class="t" style="left:663px;top:426.6px;font-size:9.8px;line-height:1;width:67.5px;text-align:right;color:#000;letter-spacing:-0.2px">360,000</div>
<div class="hc" style="left:7px;top:439px;width:35px;height:16px;"></div>
<div style="left:42px;top:439px;width:53px;height:16px;background:#fbfbff;border-right:1px solid #f3ece0;border-bottom:1px solid #f6f3ea"></div>
<div style="left:95px;top:439px;width:152px;height:16px;background:#fbfbff;border-right:1px solid #f3ece0;border-bottom:1px solid #f6f3ea"></div>
<div style="left:247px;top:439px;width:66px;height:16px;background:#fbfbff;border-right:1px solid #f3ece0;border-bottom:1px solid #f6f3ea"></div>
<div style="left:313px;top:439px;width:47px;height:16px;background:#fbfbff;border-right:1px solid #f3ece0;border-bottom:1px solid #f6f3ea"></div>
<div style="left:360px;top:439px;width:67px;height:16px;background:#fbfbff;border-right:1px solid #f3ece0;border-bottom:1px solid #f6f3ea"></div>
<div style="left:427px;top:439px;width:67px;height:16px;background:#fbfbff;border-right:1px solid #f3ece0;border-bottom:1px solid #f6f3ea"></div>
<div style="left:494px;top:439px;width:30px;height:16px;background:#fbfbff;border-right:1px solid #f3ece0;border-bottom:1px solid #f6f3ea"></div>
<div style="left:524px;top:439px;width:139px;height:16px;background:#fbfbff;border-right:1px solid #f3ece0;border-bottom:1px solid #f6f3ea"></div>
<div style="left:663px;top:439px;width:70px;height:16px;background:#fbfbff;border-right:1px solid #f3ece0;border-bottom:1px solid #f6f3ea"></div>
<div class="t" style="left:44.3px;top:442.6px;font-size:9.8px;line-height:1;color:#000;letter-spacing:-0.2px">38800</div>
<div class="t" style="left:97.3px;top:442.6px;font-size:9.8px;line-height:1;color:#000;letter-spacing:-0.2px">ANILLA 729/19 NYLON</div>
<div class="t" style="left:249.3px;top:442.6px;font-size:9.8px;line-height:1;color:#000;letter-spacing:-0.2px">Kaki</div>
<div class="t" style="left:315.3px;top:442.6px;font-size:9.8px;line-height:1;color:#000;letter-spacing:-0.2px">Única</div>
<div class="t" style="left:362.3px;top:442.6px;font-size:9.8px;line-height:1;color:#000;letter-spacing:-0.2px">08/07/2005</div>
<div class="t" style="left:429.3px;top:442.6px;font-size:9.8px;line-height:1;color:#000;letter-spacing:-0.2px">01/07/2005</div>
<div class="t" style="left:496.3px;top:442.6px;font-size:9.8px;line-height:1;color:#000;letter-spacing:-0.2px">16</div>
<div class="t" style="left:526.3px;top:442.6px;font-size:9.8px;line-height:1;color:#000;letter-spacing:-0.2px">JOSÉ ROSAS TABERNERO</div>
<div class="t" style="left:663px;top:442.6px;font-size:9.8px;line-height:1;width:67.5px;text-align:right;color:#000;letter-spacing:-0.2px">1.200,000</div>
<div class="hc" style="left:7px;top:455px;width:35px;height:16px;"></div>
<div style="left:42px;top:455px;width:53px;height:16px;background:#e9f4fc;border-right:1px solid #f3ece0;border-bottom:1px solid #f6f3ea"></div>
<div style="left:95px;top:455px;width:152px;height:16px;background:#e9f4fc;border-right:1px solid #f3ece0;border-bottom:1px solid #f6f3ea"></div>
<div style="left:247px;top:455px;width:66px;height:16px;background:#e9f4fc;border-right:1px solid #f3ece0;border-bottom:1px solid #f6f3ea"></div>
<div style="left:313px;top:455px;width:47px;height:16px;background:#e9f4fc;border-right:1px solid #f3ece0;border-bottom:1px solid #f6f3ea"></div>
<div style="left:360px;top:455px;width:67px;height:16px;background:#e9f4fc;border-right:1px solid #f3ece0;border-bottom:1px solid #f6f3ea"></div>
<div style="left:427px;top:455px;width:67px;height:16px;background:#e9f4fc;border-right:1px solid #f3ece0;border-bottom:1px solid #f6f3ea"></div>
<div style="left:494px;top:455px;width:30px;height:16px;background:#e9f4fc;border-right:1px solid #f3ece0;border-bottom:1px solid #f6f3ea"></div>
<div style="left:524px;top:455px;width:139px;height:16px;background:#e9f4fc;border-right:1px solid #f3ece0;border-bottom:1px solid #f6f3ea"></div>
<div style="left:663px;top:455px;width:70px;height:16px;background:#e9f4fc;border-right:1px solid #f3ece0;border-bottom:1px solid #f6f3ea"></div>
<div class="t" style="left:44.3px;top:458.6px;font-size:9.8px;line-height:1;color:#000;letter-spacing:-0.2px">39200</div>
<div class="t" style="left:97.3px;top:458.6px;font-size:9.8px;line-height:1;color:#000;letter-spacing:-0.2px">COPA PREF 2600 PF METRIC</div>
<div class="t" style="left:249.3px;top:458.6px;font-size:9.8px;line-height:1;color:#000;letter-spacing:-0.2px">Negro</div>
<div class="t" style="left:315.3px;top:458.6px;font-size:9.8px;line-height:1;color:#000;letter-spacing:-0.2px">Única</div>
<div class="t" style="left:362.3px;top:458.6px;font-size:9.8px;line-height:1;color:#000;letter-spacing:-0.2px">08/07/2005</div>
<div class="t" style="left:429.3px;top:458.6px;font-size:9.8px;line-height:1;color:#000;letter-spacing:-0.2px">01/07/2005</div>
<div class="t" style="left:496.3px;top:458.6px;font-size:9.8px;line-height:1;color:#000;letter-spacing:-0.2px">15</div>
<div class="t" style="left:526.3px;top:458.6px;font-size:9.8px;line-height:1;color:#000;letter-spacing:-0.2px">METRIC PRODUCTS GMB</div>
<div class="t" style="left:663px;top:458.6px;font-size:9.8px;line-height:1;width:67.5px;text-align:right;color:#000;letter-spacing:-0.2px">1.200,000</div>
<div class="hc" style="left:7px;top:471px;width:35px;height:16px;"></div>
<div style="left:42px;top:471px;width:53px;height:16px;background:#fbfbff;border-right:1px solid #f3ece0;border-bottom:1px solid #f6f3ea"></div>
<div style="left:95px;top:471px;width:152px;height:16px;background:#fbfbff;border-right:1px solid #f3ece0;border-bottom:1px solid #f6f3ea"></div>
<div style="left:247px;top:471px;width:66px;height:16px;background:#fbfbff;border-right:1px solid #f3ece0;border-bottom:1px solid #f6f3ea"></div>
<div style="left:313px;top:471px;width:47px;height:16px;background:#fbfbff;border-right:1px solid #f3ece0;border-bottom:1px solid #f6f3ea"></div>
<div style="left:360px;top:471px;width:67px;height:16px;background:#fbfbff;border-right:1px solid #f3ece0;border-bottom:1px solid #f6f3ea"></div>
<div style="left:427px;top:471px;width:67px;height:16px;background:#fbfbff;border-right:1px solid #f3ece0;border-bottom:1px solid #f6f3ea"></div>
<div style="left:494px;top:471px;width:30px;height:16px;background:#fbfbff;border-right:1px solid #f3ece0;border-bottom:1px solid #f6f3ea"></div>
<div style="left:524px;top:471px;width:139px;height:16px;background:#fbfbff;border-right:1px solid #f3ece0;border-bottom:1px solid #f6f3ea"></div>
<div style="left:663px;top:471px;width:70px;height:16px;background:#fbfbff;border-right:1px solid #f3ece0;border-bottom:1px solid #f6f3ea"></div>
<div class="t" style="left:44.3px;top:474.6px;font-size:9.8px;line-height:1;color:#000;letter-spacing:-0.2px">99800</div>
<div class="t" style="left:97.3px;top:474.6px;font-size:9.8px;line-height:1;color:#000;letter-spacing:-0.2px">GOMA 0,6 X 8 MM LIT</div>
<div class="t" style="left:249.3px;top:474.6px;font-size:9.8px;line-height:1;color:#000;letter-spacing:-0.2px">Negro</div>
<div class="t" style="left:315.3px;top:474.6px;font-size:9.8px;line-height:1;color:#000;letter-spacing:-0.2px">Única</div>
<div class="t" style="left:362.3px;top:474.6px;font-size:9.8px;line-height:1;color:#000;letter-spacing:-0.2px">08/07/2005</div>
<div class="t" style="left:429.3px;top:474.6px;font-size:9.8px;line-height:1;color:#000;letter-spacing:-0.2px">01/07/2005</div>
<div class="t" style="left:496.3px;top:474.6px;font-size:9.8px;line-height:1;color:#000;letter-spacing:-0.2px">6</div>
<div class="t" style="left:526.3px;top:474.6px;font-size:9.8px;line-height:1;color:#000;letter-spacing:-0.2px">BIES CORNELLA, S.L.</div>
<div class="t" style="left:663px;top:474.6px;font-size:9.8px;line-height:1;width:67.5px;text-align:right;color:#000;letter-spacing:-0.2px">6.000,000</div>
<div class="hc" style="left:7px;top:487px;width:35px;height:4px;"></div>
<div style="left:42px;top:487px;width:53px;height:4px;background:#e9f4fc;border-right:1px solid #f3ece0;border-bottom:1px solid #f6f3ea"></div>
<div style="left:95px;top:487px;width:152px;height:4px;background:#e9f4fc;border-right:1px solid #f3ece0;border-bottom:1px solid #f6f3ea"></div>
<div style="left:247px;top:487px;width:66px;height:4px;background:#e9f4fc;border-right:1px solid #f3ece0;border-bottom:1px solid #f6f3ea"></div>
<div style="left:313px;top:487px;width:47px;height:4px;background:#e9f4fc;border-right:1px solid #f3ece0;border-bottom:1px solid #f6f3ea"></div>
<div style="left:360px;top:487px;width:67px;height:4px;background:#e9f4fc;border-right:1px solid #f3ece0;border-bottom:1px solid #f6f3ea"></div>
<div style="left:427px;top:487px;width:67px;height:4px;background:#e9f4fc;border-right:1px solid #f3ece0;border-bottom:1px solid #f6f3ea"></div>
<div style="left:494px;top:487px;width:30px;height:4px;background:#e9f4fc;border-right:1px solid #f3ece0;border-bottom:1px solid #f6f3ea"></div>
<div style="left:524px;top:487px;width:139px;height:4px;background:#e9f4fc;border-right:1px solid #f3ece0;border-bottom:1px solid #f6f3ea"></div>
<div style="left:663px;top:487px;width:70px;height:4px;background:#e9f4fc;border-right:1px solid #f3ece0;border-bottom:1px solid #f6f3ea"></div>
<svg style="left:12px;top:410px" width="7" height="11" viewBox="0 0 7 11"><path d="M0.5 0.5 L6 5.5 L0.5 10.5 Z" fill="#000"/></svg>
<div style="left:776px;top:326px;width:15px;height:164px;background:linear-gradient(90deg,#f1efe8,#fdfdfb 50%,#f6f5f0)"></div>
<div class="sbb" style="left:776px;top:327px;width:15px;height:15px;"></div>
<svg style="left:776px;top:327px" width="15" height="15" viewBox="0 0 15 15"><path d="M3.9 9.2 L7.5 5.6 L11.1 9.2" fill="none" stroke="#4d6185" stroke-width="2.1"/></svg>
<div class="sbb" style="left:776px;top:344px;width:15px;height:83px;"></div>
<div style="left:780px;top:381px;width:7px;height:1px;background:#eef3fe"></div>
<div style="left:781px;top:382px;width:7px;height:1px;background:#8ca4dc"></div>
<div style="left:780px;top:383px;width:7px;height:1px;background:#eef3fe"></div>
<div style="left:781px;top:384px;width:7px;height:1px;background:#8ca4dc"></div>
<div style="left:780px;top:385px;width:7px;height:1px;background:#eef3fe"></div>
<div style="left:781px;top:386px;width:7px;height:1px;background:#8ca4dc"></div>
<div style="left:780px;top:387px;width:7px;height:1px;background:#eef3fe"></div>
<div style="left:781px;top:388px;width:7px;height:1px;background:#8ca4dc"></div>
<div class="sbb" style="left:776px;top:473px;width:15px;height:16px;"></div>
<svg style="left:776px;top:473px" width="15" height="16" viewBox="0 0 15 16"><path d="M3.9 6 L7.5 9.6 L11.1 6" fill="none" stroke="#4d6185" stroke-width="2.1"/></svg>
<div class="ed" style="left:41px;top:492px;width:49px;height:18px;"></div>
<div class="t" style="left:44px;top:496.5px;font-size:9.8px;line-height:1;color:#aca899;letter-spacing:-0.2px">12100</div>
<div class="ed" style="left:89px;top:492px;width:152px;height:18px;"></div>
<div class="t" style="left:92px;top:496.5px;font-size:9.8px;line-height:1;color:#aca899;letter-spacing:-0.2px">COPA PREF 2600 AF METRIC</div>
<div class="ed" style="left:240px;top:492px;width:65px;height:18px;"></div>
<div class="t" style="left:243px;top:496.5px;font-size:9.8px;line-height:1;color:#aca899;letter-spacing:-0.2px">Blanco</div>
<div class="ed" style="left:304px;top:492px;width:51px;height:18px;"></div>
<div class="t" style="left:307px;top:496.5px;font-size:9.8px;line-height:1;color:#aca899;letter-spacing:-0.2px">48</div>
<div class="ed" style="left:354px;top:492px;width:66px;height:18px;background:#fff"></div>
<div class="t" style="left:357px;top:497.1px;font-size:9.8px;line-height:1;letter-spacing:-0.3px">01/07/2005</div>
<div class="sbb" style="left:404px;top:494px;width:15px;height:14px;"></div>
<svg style="left:404px;top:494px" width="15" height="14" viewBox="0 0 15 14"><path d="M4 4.8 L7.5 8.3 L11 4.8" fill="none" stroke="#4d6185" stroke-width="2.1"/></svg>
<div class="ed" style="left:421px;top:492px;width:172px;height:18px;background:#fff"></div>
<div class="t" style="left:425px;top:497.1px;font-size:9.8px;line-height:1;letter-spacing:-0.25px">[15] METRIC PRODUCTS GMB</div>
<div class="sbb" style="left:576px;top:494px;width:15px;height:14px;"></div>
<svg style="left:576px;top:494px" width="15" height="14" viewBox="0 0 15 14"><path d="M4 4.8 L7.5 8.3 L11 4.8" fill="none" stroke="#4d6185" stroke-width="2.1"/></svg>
<div class="ed" style="left:593px;top:492px;width:64px;height:18px;"></div>
<div class="t" style="left:593px;top:496.5px;font-size:9.8px;line-height:1;width:60px;text-align:right;color:#aca899;letter-spacing:-0.2px">1000</div>
<div class="ed" style="left:657px;top:492px;width:64px;height:18px;background:#fff"></div>
<div class="t" style="left:657px;top:497.1px;font-size:9.8px;line-height:1;width:60px;text-align:right;letter-spacing:-0.2px">1000</div>
<div style="left:721px;top:492px;width:24px;height:24px;border:1px solid #4a4a44;background:#fff;box-shadow:inset -1px -1px 0 #d8d5c8"></div>
<div style="left:745px;top:492px;width:24px;height:24px;border:1px solid #4a4a44;background:#fff;box-shadow:inset -1px -1px 0 #d8d5c8"></div>
<div style="left:769px;top:492px;width:24px;height:24px;border:1px solid #4a4a44;background:#fff;box-shadow:inset -1px -1px 0 #d8d5c8"></div>
<svg style="left:721px;top:492px" width="24" height="24" viewBox="0 0 24 24"><path d="M5.6 13.2 L9.2 16.6 L18.6 7.6" fill="none" stroke="#1ec81e" stroke-width="2.5" stroke-linecap="round" stroke-linejoin="round"/></svg>
<svg style="left:745px;top:492px" width="24" height="24" viewBox="0 0 24 24"><path d="M5 5.5 L18.5 19 M18 5.5 L5.5 19.5" fill="none" stroke="#e01818" stroke-width="2.1" stroke-linecap="round"/></svg>
<svg style="left:769px;top:492px" width="24" height="24" viewBox="0 0 24 24"><defs><linearGradient id="tg" x1="0" y1="0" x2="1" y2="0"><stop offset="0" stop-color="#9a9a9a"/><stop offset="0.35" stop-color="#fafafa"/><stop offset="0.75" stop-color="#d8d8d8"/><stop offset="1" stop-color="#7c7c7c"/></linearGradient></defs><path d="M5 8 L5 19 Q5 21 9 21 Q14 21 17 18.5 Q19 16.5 19 14 L19 5.5 Q16 2.5 11 3.5 Q6 4.5 5 8 Z" fill="url(#tg)" stroke="#8a8a8a" stroke-width="0.6"/><path d="M5.2 8.4 Q6.5 4.6 11.5 3.5 Q16 2.8 18.8 5.6 Q14.5 5.6 11 7.2 Q7.5 8.8 5.2 8.4 Z" fill="#4e4e4e"/><path d="M5.2 8.4 Q7.5 8.8 11 7.2 Q14.5 5.6 18.8 5.6" fill="none" stroke="#e8e8e8" stroke-width="0.6"/></svg>
<div class="btn" style="left:794px;top:321px;width:203px;height:21px;"></div>
<div class="t" style="left:794px;top:326.49px;font-size:11px;line-height:1;width:203px;text-align:center;letter-spacing:-0.3px">Generar pedidos de compra</div>
<div style="left:813px;top:371px;width:168px;height:85px;border:1px solid #d0d0bf;border-radius:4px"></div>
<div style="left:819px;top:364px;width:55px;height:14px;background:#ece9d8"></div>
<div class="t" style="left:822px;top:365.69px;font-size:11px;line-height:1;color:#1846b0;letter-spacing:-0.1px">Proveedor</div>
<div class="t" style="left:820.5px;top:389.5px;font-size:9.8px;line-height:1;color:#aca899;letter-spacing:-0.25px">precio  compra</div>
<div class="t" style="left:900px;top:389.5px;font-size:9.8px;line-height:1;width:71.5px;text-align:right;color:#aca899;letter-spacing:-0.2px">0,450000</div>
<div class="t" style="left:820.5px;top:405.5px;font-size:9.8px;line-height:1;color:#aca899;letter-spacing:-0.25px">plazo  entrega</div>
<div class="t" style="left:900px;top:405.5px;font-size:9.8px;line-height:1;width:71.5px;text-align:right;color:#aca899;letter-spacing:-0.2px">10</div>
<div class="t" style="left:820.5px;top:421.5px;font-size:9.8px;line-height:1;color:#aca899;letter-spacing:-0.25px">pedido  minimo</div>
<div class="t" style="left:900px;top:421.5px;font-size:9.8px;line-height:1;width:71.5px;text-align:right;color:#aca899;letter-spacing:-0.2px">1000</div>
<div class="t" style="left:820.5px;top:437.5px;font-size:9.8px;line-height:1;color:#aca899;letter-spacing:-0.25px">pedido  multiplo</div>
<div class="t" style="left:900px;top:437.5px;font-size:9.8px;line-height:1;width:71.5px;text-align:right;color:#aca899;letter-spacing:-0.2px">100</div>
<div class="btn" style="left:850px;top:493px;width:102px;height:21px;"></div>
<div class="t" style="left:850px;top:499.47px;font-size:9.6px;line-height:1;width:102px;text-align:center;letter-spacing:-0.4px">Pasar a real</div>
<div style="left:6px;top:542px;width:991px;height:23px;background:#80ff80"></div>
<div style="left:421px;top:512px;width:173px;height:26px;background:#fff;border:1px solid #000"></div>
<div class="t" style="left:424.5px;top:514.7px;font-size:9.8px;line-height:1;letter-spacing:-0.25px">[15] METRIC PRODUCTS GMB</div>
<div style="left:422px;top:525px;width:171px;height:12px;background:#316ac5"></div>
<div class="t" style="left:424.5px;top:526.7px;font-size:9.8px;line-height:1;color:#fff;letter-spacing:-0.25px">[6] BIES CORNELLA, S.L.</div>
</body></html>
